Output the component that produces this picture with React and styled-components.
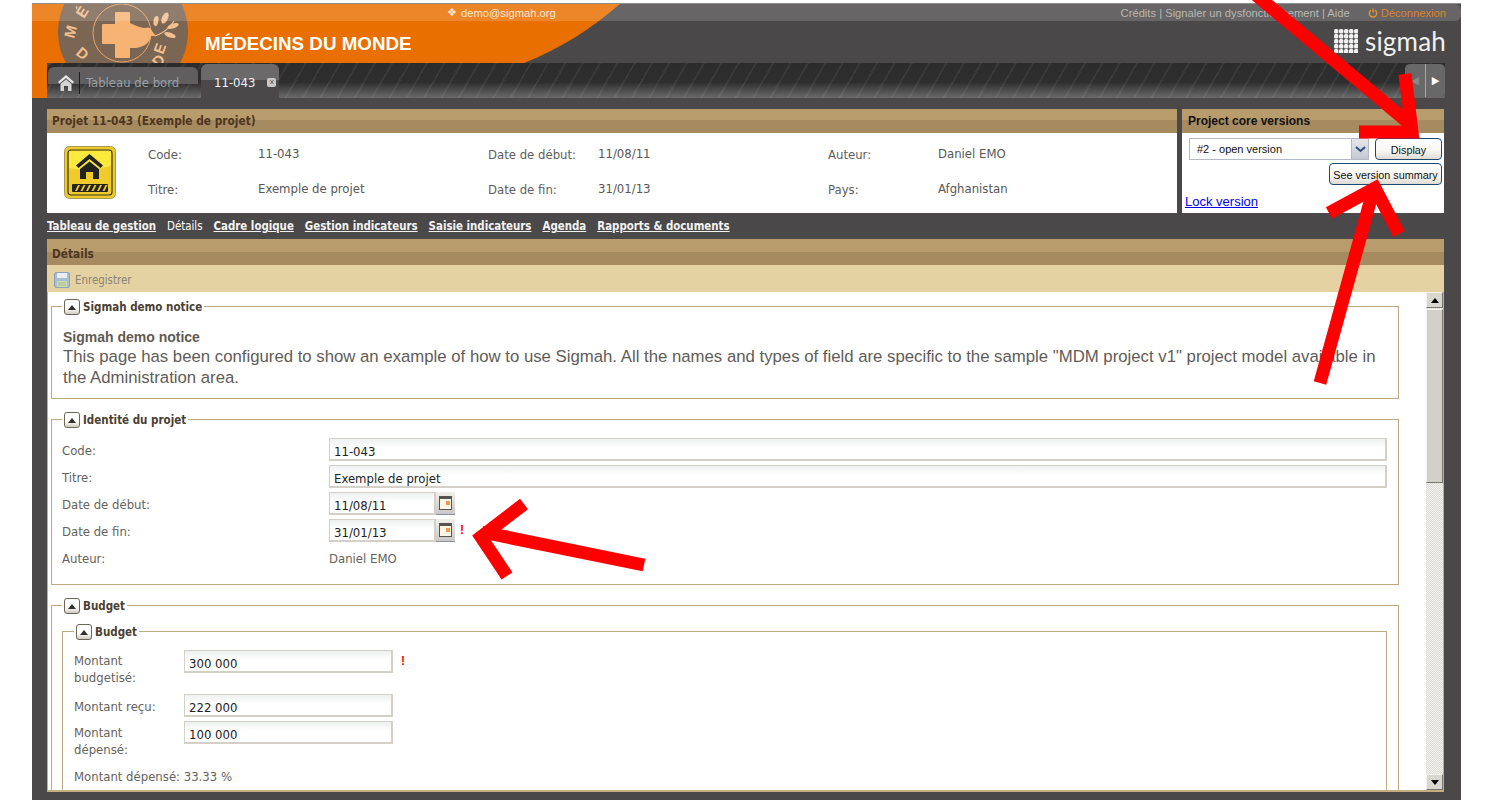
import styled, { createGlobalStyle } from "styled-components";

const GlobalStyle = createGlobalStyle`
  html, body { margin: 0; padding: 0; background: #fff; }
  body { font-family: "DejaVu Sans Condensed", "DejaVu Sans", sans-serif; font-size: 13px; color: #5d5a55; }
  * { box-sizing: border-box; }
`;

const Page = styled.div`
  position: relative;
  width: 1500px;
  height: 800px;
  overflow: hidden;
  padding: 3px 39px 0 32px;
  background: #fff;
`;

const Frame = styled.div`
  position: relative;
  height: 797px;
  overflow: hidden;
  background: #4a4848;
  border-top: 1px solid #8f8f8f;
`;

const Swoosh = styled.svg`
  position: absolute;
  left: 0;
  top: 0;
`;

const Header = styled.header`
  position: relative;
  height: 59px;
`;

const TopStrip = styled.div`
  display: flex;
  align-items: center;
  height: 17px;
  padding: 0 15px 0 415px;
  border-radius: 0 6px 6px 0;
  background: rgba(255, 255, 255, 0.16);
  font-family: "Liberation Sans", Arial, sans-serif;
  font-size: 11.2px;
  color: #f6e6d2;
`;

const Email = styled.span`
  display: flex;
  align-items: center;
  gap: 4px;
  flex: 1;
`;

const TopLinks = styled.span`
  color: #b9b7b5;
`;

const Logout = styled.span`
  display: flex;
  align-items: center;
  gap: 3px;
  margin-left: 18px;
  color: #d9852c;
`;

const BrandRow = styled.div`
  display: flex;
  align-items: center;
  justify-content: space-between;
  height: 42px;
  padding: 3px 15px 0 173px;
`;

const BrandName = styled.div`
  font-family: "Liberation Sans", Arial, sans-serif;
  font-size: 18.8px;
  font-weight: 700;
  color: #fff;
`;

const SigmahLogo = styled.div`
  display: flex;
  align-items: center;
  gap: 7px;
  margin-top: -5px;
  font-family: Lato, sans-serif;
  font-size: 26px;
  line-height: 24px;
  letter-spacing: 0.2px;
  color: #f1f1f1;
`;

const TabBar = styled.div`
  position: relative;
  display: flex;
  align-items: flex-end;
  gap: 3px;
  height: 35px;
  margin: 0 16px 0 15px;
  padding: 0 0 0 1px;
  border-radius: 8px 0 0 0;
  background:
    repeating-linear-gradient(120deg, transparent 0 13px, rgba(255, 255, 255, 0.06) 13px 15px),
    linear-gradient(#2d2c2c 0, #2f2e2e 55%, #6a6a6a 100%);
`;

const HomeTab = styled.div`
  display: flex;
  align-items: center;
  width: 150px;
  height: 31px;
  padding: 0 0 0 9px;
  border-radius: 6px 6px 0 0;
  background: linear-gradient(#605e5e 0, #605e5e 17px, transparent 17px);
  color: #98a0a8;
`;

const TabDivider = styled.span`
  width: 1px;
  height: 22px;
  margin: 0 6px 0 4px;
  background: #1c1c1c;
`;

const ActiveTab = styled.div`
  display: flex;
  align-items: center;
  gap: 12px;
  width: 78px;
  height: 34px;
  padding: 3px 0 0 13px;
  border-radius: 6px 6px 0 0;
  background: linear-gradient(#6b6969 0, #6b6969 16px, #4a4848 16px);
  color: #f2f4f6;
`;

const TabClose = styled.span`
  display: grid;
  place-items: center;
  width: 9px;
  height: 9px;
  border-radius: 2px;
  background: #c9c9c9;
  font-family: "Liberation Sans", sans-serif;
  font-size: 9px;
  line-height: 9px;
  color: #555;
`;

const TabArrows = styled.div`
  display: flex;
  margin: 0 0 1px auto;
  height: 33px;
  border-radius: 5px;
  background: #696868;
`;

const TabArrow = styled.span`
  display: grid;
  place-items: center;
  width: 20px;
  border-left: ${(p) => (p.$divided ? "1px solid #a8a8a8" : "none")};
  color: ${(p) => (p.$dim ? "#8b8a8a" : "#fff")};
  font-size: 11px;
`;

const Main = styled.main`
  display: flex;
  flex-direction: column;
  padding: 11px 17px 0 15px;
`;

const TopRow = styled.div`
  display: flex;
  gap: 5px;
  height: 104px;
`;

const Panel = styled.section`
  display: flex;
  flex-direction: column;
  flex: ${(p) => (p.$side ? "0 0 262px" : "1")};
  background: #fff;
  overflow: hidden;
`;

const DetailsPanel = styled(Panel)`
  flex: 0 0 553px;
`;

const PanelHead = styled.div`
  flex: none;
  height: ${(p) => p.$height || "24px"};
  padding: ${(p) => p.$top || "5px"} 5px 0 ${(p) => (p.$plain ? "6px" : "5px")};
  background: linear-gradient(#b99c6b 0, #b99c6b ${(p) => p.$split || "11px"}, #a68b61 ${(p) => p.$split || "11px"});
  font-family: ${(p) => (p.$plain ? '"Liberation Sans", Arial, sans-serif' : '"DejaVu Sans Condensed", "DejaVu Sans", sans-serif')};
  font-size: ${(p) => (p.$plain ? "12px" : "11.8px")};
  font-weight: 700;
  color: ${(p) => (p.$plain ? "#111" : "#4e3620")};
`;

const ProjectInfo = styled.div`
  display: grid;
  grid-template-columns: 84px 110px 230px 110px 230px 110px 1fr;
  grid-template-rows: 35px 35px;
  align-items: center;
  padding: 4px 0 0 17px;
`;

const ProjectIcon = styled.div`
  grid-row: 1 / span 2;
  display: flex;
`;

const InfoLabel = styled.span`
  color: #5f5d5b;
`;

const InfoValue = styled.span`
  margin-top: -2px;
  color: #5a5652;
`;

const VersionBody = styled.div`
  display: flex;
  flex-direction: column;
  padding: 5px 2px 0 3px;
`;

const VersionRow = styled.div`
  display: flex;
  justify-content: flex-end;
  gap: 6px;
  margin-bottom: 3px;
`;

const VersionSelect = styled.div`
  display: flex;
  align-items: center;
  justify-content: space-between;
  width: 180px;
  height: 22px;
  border: 1px solid #b5b8c8;
  padding-left: 7px;
  font-family: "Liberation Sans", Arial, sans-serif;
  font-size: 11px;
  color: #111;
`;

const SelectArrow = styled.span`
  display: grid;
  place-items: center;
  width: 17px;
  height: 100%;
  background: linear-gradient(#e6e7ec, #c4c7d2);
  border-left: 1px solid #b5b8c8;
`;

const ActionButton = styled.button`
  height: 22px;
  width: ${(p) => p.$width};
  padding: 2px 0 0;
  border: 1px solid #1d4a72;
  border-radius: 4px;
  background: linear-gradient(#fff 0, #f7f6f2 60%, #dedbd2 100%);
  font-family: "Liberation Sans", Arial, sans-serif;
  font-size: 10.8px;
  color: #111;
`;

const LockLink = styled.a`
  margin-top: 6px;
  font-family: "Liberation Sans", Arial, sans-serif;
  font-size: 13px;
  color: #00e;
  text-decoration: underline;
`;

const TabsNav = styled.nav`
  display: flex;
  gap: 11px;
  height: 26px;
  padding-top: 6px;
  font-size: 11.4px;
  font-weight: 700;
  color: #f3f3f3;
`;

const NavLink = styled.span`
  text-decoration: ${(p) => (p.$active ? "none" : "underline")};
  font-weight: ${(p) => (p.$active ? 400 : 700)};
  color: ${(p) => (p.$active ? "#fff" : "inherit")};
`;

const Toolbar = styled.div`
  flex: none;
  display: flex;
  align-items: center;
  gap: 5px;
  height: 27px;
  padding: 3px 0 0 7px;
  background: #e5d2a3;
  font-size: 11.4px;
  color: #8a8475;
`;

const DetailsBody = styled.div`
  display: flex;
  flex: 1;
  min-height: 0;
  border: 1px solid #c5ae80;
  border-top: 0;
  border-bottom-width: 2px;
`;

const ScrollContent = styled.div`
  flex: 1;
  min-width: 0;
  overflow: hidden;
  padding: 6px 27px 0 3px;
`;

const FieldGroup = styled.fieldset`
  margin: ${(p) => p.$margin || "0 0 12px"};
  min-width: 0;
  padding: ${(p) => p.$padding || "0 11px 0 10px"};
  border: 1px solid #bfa97f;
`;

const GroupLegend = styled.legend`
  display: flex;
  align-items: center;
  gap: 3px;
  height: 16px;
  margin-left: 0;
  padding: 2px 2px 0;
  font-size: 11.5px;
  font-weight: 700;
  color: #4b4032;
`;

const Toggle = styled.span`
  display: grid;
  place-items: center;
  flex: none;
  width: 16px;
  height: 16px;
  border: 1px solid #6e6559;
  border-radius: 3px;
  background: linear-gradient(#fff 60%, #cfcac0);
  &::before {
    content: "";
    border: 4px solid transparent;
    border-top: 0;
    border-bottom: 5px solid #33302b;
  }
`;

const NoticeTitle = styled.div`
  margin: 15px 0 0 1px;
  font-family: "Liberation Sans", Arial, sans-serif;
  font-size: 14px;
  font-weight: 700;
  line-height: 17px;
  color: #5f5a52;
`;

const NoticeText = styled.p`
  margin: 0 0 10px 1px;
  font-family: "Liberation Sans", Arial, sans-serif;
  font-size: 16.75px;
  line-height: 21px;
  color: #5f5c58;
`;

const FormGrid = styled.div`
  display: grid;
  grid-template-columns: ${(p) => p.$label} 1fr;
  row-gap: 4px;
  padding: ${(p) => p.$padding};
`;

const FieldLabel = styled.label`
  padding: ${(p) => p.$top || "4px"} 0 ${(p) => p.$bottom || "0"};
  line-height: 17px;
  color: #66625c;
`;

const FieldValue = styled.div`
  display: flex;
  align-items: flex-start;
  min-height: 23px;
`;

const TextInput = styled.div`
  width: ${(p) => p.$width || "100%"};
  height: 23px;
  padding: 5px 0 0 4px;
  border: 2px solid #dcd8d0;
  border-width: 1px 2px 2px 1px;
  border-color: #d4d0c8;
  background: linear-gradient(#eef1f1 0, #fff 9px);
  line-height: 16px;
  color: #222;
`;

const DateButton = styled.span`
  display: grid;
  place-items: center;
  width: 19px;
  height: 23px;
  background: linear-gradient(#f2f0ea, #c9c8c6);
  border-bottom: 1px solid #87909c;
`;

const Mark = styled.span`
  margin-left: ${(p) => p.$gap || "5px"};
  font-family: "Liberation Sans", Arial, sans-serif;
  font-size: 12px;
  font-weight: 700;
  line-height: 23px;
  color: #f00;
`;

const StaticValue = styled.span`
  padding-top: 5px;
  color: #66625c;
`;

const BudgetNote = styled.div`
  margin: 11px 0 40px;
  color: #66625c;
`;

const ScrollBar = styled.div`
  flex: 0 0 17px;
  display: flex;
  flex-direction: column;
  background: repeating-conic-gradient(#dcdbd7 0 25%, #f4f3f0 0 50%) 0 0 / 2px 2px;
`;

const ScrollButton = styled.div`
  flex: none;
  display: grid;
  place-items: center;
  height: 16px;
  background: #dad7d0;
  border: 1px solid;
  border-color: #f3f2ee #77756f #77756f #f3f2ee;
  &::before {
    content: "";
    border: 4px solid transparent;
    ${(p) => (p.$down ? "border-top: 5px solid #000; border-bottom: 0;" : "border-bottom: 5px solid #000; border-top: 0;")}
  }
`;

const ScrollThumb = styled.div`
  flex: none;
  height: 174px;
  margin-top: 1px;
  background: #d3d0c9;
  border: 1px solid;
  border-color: #f3f2ee #77756f #77756f #f3f2ee;
`;

const ScrollSpacer = styled.div`
  flex: 1;
`;

const Arrows = styled.svg`
  position: absolute;
  left: 0;
  top: 0;
  pointer-events: none;
`;

const HomeIcon = () => (
  <svg width="18" height="18" viewBox="0 0 18 18">
    <path d="M9 1 L17 8 L15.5 9.5 L9 4 L2.5 9.5 L1 8 Z" fill="#e8e8e8" />
    <path d="M3.5 10 L9 5.5 L14.5 10 V17 H11 V12 H7 V17 H3.5 Z" fill="#d5d5d5" />
  </svg>
);

const LogoBadge = () => (
  <g>
    <circle cx="91" cy="28" r="65" fill="#7b6553" />
    <circle cx="90" cy="29" r="29" fill="none" stroke="#e7a56a" strokeWidth="1" />
    <path d="M83 9 Q83 8 84 8 H97 Q98 8 98 9 V19 Q108 24 113 24 Q118 22 120 27 L124 32 L119 32 Q116 45 98 44 V53 Q98 54 97 54 H84 Q83 54 83 53 V40 H71 Q70 40 70 39 V21 Q70 20 71 20 H83 Z" fill="#f6b373" />
    <path d="M123 32 Q135 28 142 17" fill="none" stroke="#f2c08f" strokeWidth="1.2" />
    <ellipse cx="133" cy="14" rx="3" ry="6" fill="#f2c08f" transform="rotate(25 133 14)" />
    <ellipse cx="124" cy="17" rx="2.4" ry="5" fill="#f2c08f" transform="rotate(10 124 17)" />
    <ellipse cx="141" cy="22" rx="6" ry="2.4" fill="#f2c08f" transform="rotate(-20 141 22)" />
    <ellipse cx="138" cy="31" rx="6" ry="2.4" fill="#f2c08f" transform="rotate(20 138 31)" />
    <g fontFamily="Liberation Sans, sans-serif" fontWeight="700" fontSize="15" fill="#f2c08f">
      <text transform="translate(42 35) rotate(-75)">M</text>
      <text transform="translate(52 15) rotate(-58)">É</text>
      <text transform="translate(43 50) rotate(40)">D</text>
      <text transform="translate(127 64) rotate(-50)">D</text>
      <text transform="translate(131 51) rotate(-70)">E</text>
    </g>
  </g>
);

const SigmahMark = () => (
  <svg width="24" height="24" viewBox="0 0 24 24" fill="#f1f1f1">
    {[0, 1, 2, 3, 4].flatMap((r) =>
      [0, 1, 2, 3, 4].map((c) => <rect key={`${r}-${c}`} x={c * 5} y={r * 5} width="4.4" height="4.4" rx="1.5" />)
    )}
  </svg>
);

const ProjectBadge = () => (
  <svg width="52" height="53" viewBox="0 0 52 53">
    <rect x="0.5" y="0.5" width="51" height="52" rx="5" fill="#eec92c" stroke="#a89a55" />
    <rect x="4" y="4" width="44" height="45" rx="3" fill="#f0cb2c" stroke="#3a3520" strokeWidth="1.2" />
    <path d="M5 5 H47 V20 Q26 26 5 22 Z" fill="#fbe93c" />
    <path d="M25.5 8 L39 19.5 L36.5 22 L25.5 13 L14.5 22 L12 19.5 Z" fill="#23231f" />
    <path d="M16 23 L25.5 15.5 L35 23 V33 H29 V26 H22 V33 H16 Z" fill="#23231f" />
    <rect x="8" y="38" width="36" height="8" rx="1" fill="#23231f" />
    {[0, 1, 2, 3, 4, 5].map((i) => (
      <path key={i} d={`M${11 + i * 5.5} 45 L${14 + i * 5.5} 39 H${16 + i * 5.5} L${13 + i * 5.5} 45 Z`} fill="#f0cb2c" />
    ))}
  </svg>
);

const FloppyIcon = () => (
  <svg width="16" height="16" viewBox="0 0 16 16">
    <rect x="0.5" y="0.5" width="15" height="15" rx="1.5" fill="#a9bdd0" stroke="#8ea3b8" />
    <rect x="3" y="1" width="10" height="5" fill="#e7edf2" />
    <rect x="3" y="9" width="10" height="6" fill="#cfdcae" />
    <path d="M4 11 H12 M4 13 H12" stroke="#9fb08a" strokeWidth="0.8" />
  </svg>
);

const CalendarIcon = () => (
  <svg width="13" height="14" viewBox="0 0 13 14">
    <rect x="0.5" y="0.5" width="12" height="13" fill="#fbf5e6" stroke="#55544f" />
    <rect x="1" y="1" width="11" height="2" fill="#55544f" />
    <rect x="7" y="5" width="4" height="4" fill="#ee9a4d" />
  </svg>
);

const Chevron = () => (
  <svg width="11" height="7" viewBox="0 0 11 7">
    <path d="M1 1 L5.5 5 L10 1" fill="none" stroke="#2f4f7f" strokeWidth="2" />
  </svg>
);

const PowerIcon = () => (
  <svg width="10" height="10" viewBox="0 0 10 10" fill="none" stroke="#e2922f" strokeWidth="1.4">
    <path d="M3 2.2 A3.7 3.7 0 1 0 7 2.2 M5 0.5 V4.5" />
  </svg>
);

const App = () => {
  return (
    <Page>
      <GlobalStyle />
      <Frame>
        <Swoosh width="600" height="95" viewBox="0 0 600 95">
          <path d="M0 0 H588 C560 24 530 44 492 59 H15 V94 H0 Z" fill="#e96f00" />
          <LogoBadge />
        </Swoosh>
        <Header>
          <TopStrip>
            <Email>
              <span>❖</span>
              demo@sigmah.org
            </Email>
            <TopLinks>Crédits | Signaler un dysfonctionnement | Aide</TopLinks>
            <Logout>
              <PowerIcon />
              Déconnexion
            </Logout>
          </TopStrip>
          <BrandRow>
            <BrandName>MÉDECINS DU MONDE</BrandName>
            <SigmahLogo>
              <SigmahMark />
              sigmah
            </SigmahLogo>
          </BrandRow>
        </Header>
        <TabBar>
          <HomeTab>
            <HomeIcon />
            <TabDivider />
            Tableau de bord
          </HomeTab>
          <ActiveTab>
            11-043
            <TabClose>×</TabClose>
          </ActiveTab>
          <TabArrows>
            <TabArrow $dim>◀</TabArrow>
            <TabArrow $divided>▶</TabArrow>
          </TabArrows>
        </TabBar>
        <Main>
          <TopRow>
            <Panel>
              <PanelHead>Projet 11-043 (Exemple de projet)</PanelHead>
              <ProjectInfo>
                <ProjectIcon>
                  <ProjectBadge />
                </ProjectIcon>
                <InfoLabel>Code:</InfoLabel>
                <InfoValue>11-043</InfoValue>
                <InfoLabel>Date de début:</InfoLabel>
                <InfoValue>11/08/11</InfoValue>
                <InfoLabel>Auteur:</InfoLabel>
                <InfoValue>Daniel EMO</InfoValue>
                <InfoLabel>Titre:</InfoLabel>
                <InfoValue>Exemple de projet</InfoValue>
                <InfoLabel>Date de fin:</InfoLabel>
                <InfoValue>31/01/13</InfoValue>
                <InfoLabel>Pays:</InfoLabel>
                <InfoValue>Afghanistan</InfoValue>
              </ProjectInfo>
            </Panel>
            <Panel $side>
              <PanelHead $plain>Project core versions</PanelHead>
              <VersionBody>
                <VersionRow>
                  <VersionSelect>
                    #2 - open version
                    <SelectArrow>
                      <Chevron />
                    </SelectArrow>
                  </VersionSelect>
                  <ActionButton $width="67px">Display</ActionButton>
                </VersionRow>
                <VersionRow>
                  <ActionButton $width="113px">See version summary</ActionButton>
                </VersionRow>
                <LockLink href="#">Lock version</LockLink>
              </VersionBody>
            </Panel>
          </TopRow>
          <TabsNav>
            <NavLink>Tableau de gestion</NavLink>
            <NavLink $active>Détails</NavLink>
            <NavLink>Cadre logique</NavLink>
            <NavLink>Gestion indicateurs</NavLink>
            <NavLink>Saisie indicateurs</NavLink>
            <NavLink>Agenda</NavLink>
            <NavLink>Rapports &amp; documents</NavLink>
          </TabsNav>
          <DetailsPanel>
            <PanelHead $height="26px" $top="8px" $split="13px">
              Détails
            </PanelHead>
            <Toolbar>
              <FloppyIcon />
              Enregistrer
            </Toolbar>
            <DetailsBody>
              <ScrollContent>
                <FieldGroup>
                  <GroupLegend>
                    <Toggle />
                    Sigmah demo notice
                  </GroupLegend>
                  <NoticeTitle>Sigmah demo notice</NoticeTitle>
                  <NoticeText>
                    This page has been configured to show an example of how to use Sigmah. All the names and types of
                    field are specific to the sample "MDM project v1" project model available in the Administration
                    area.
                  </NoticeText>
                </FieldGroup>
                <FieldGroup>
                  <GroupLegend>
                    <Toggle />
                    Identité du projet
                  </GroupLegend>
                  <FormGrid $label="267px" $padding="11px 0 17px">
                    <FieldLabel>Code:</FieldLabel>
                    <FieldValue>
                      <TextInput>11-043</TextInput>
                    </FieldValue>
                    <FieldLabel>Titre:</FieldLabel>
                    <FieldValue>
                      <TextInput>Exemple de projet</TextInput>
                    </FieldValue>
                    <FieldLabel>Date de début:</FieldLabel>
                    <FieldValue>
                      <TextInput $width="107px">11/08/11</TextInput>
                      <DateButton>
                        <CalendarIcon />
                      </DateButton>
                    </FieldValue>
                    <FieldLabel>Date de fin:</FieldLabel>
                    <FieldValue>
                      <TextInput $width="107px">31/01/13</TextInput>
                      <DateButton>
                        <CalendarIcon />
                      </DateButton>
                      <Mark>!</Mark>
                    </FieldValue>
                    <FieldLabel>Auteur:</FieldLabel>
                    <StaticValue>Daniel EMO</StaticValue>
                  </FormGrid>
                </FieldGroup>
                <FieldGroup $padding="10px 11px 0 10px">
                  <GroupLegend>
                    <Toggle />
                    Budget
                  </GroupLegend>
                  <FieldGroup $padding="0 11px" $margin="0">
                    <GroupLegend>
                      <Toggle />
                      Budget
                    </GroupLegend>
                    <FormGrid $label="110px" $padding="11px 0 0">
                      <FieldLabel $top="2px" $bottom="4px">
                        Montant
                        <br />
                        budgetisé:
                      </FieldLabel>
                      <FieldValue>
                        <TextInput $width="209px">300 000</TextInput>
                        <Mark $gap="8px">!</Mark>
                      </FieldValue>
                      <FieldLabel>Montant reçu:</FieldLabel>
                      <FieldValue>
                        <TextInput $width="209px">222 000</TextInput>
                      </FieldValue>
                      <FieldLabel $top="3px">
                        Montant
                        <br />
                        dépensé:
                      </FieldLabel>
                      <FieldValue>
                        <TextInput $width="209px">100 000</TextInput>
                      </FieldValue>
                    </FormGrid>
                    <BudgetNote>Montant dépensé: 33.33 %</BudgetNote>
                  </FieldGroup>
                </FieldGroup>
              </ScrollContent>
              <ScrollBar>
                <ScrollButton />
                <ScrollThumb />
                <ScrollSpacer />
                <ScrollButton $down />
              </ScrollBar>
            </DetailsBody>
          </DetailsPanel>
        </Main>
      </Frame>
      <Arrows width="1500" height="800" viewBox="0 0 1500 800">
        <g fill="none" stroke="#f00" strokeWidth="13" strokeMiterlimit="10">
          <path d="M1256 -5 L1410 124" />
          <path d="M1405 74 L1412 132 L1359 132" />
          <path d="M1320 383 L1372 195" />
          <path d="M1329 213 L1375 188 L1399 234" />
          <path d="M644 565 L482 532" />
          <path d="M524 504 L481 537 L507 576" />
        </g>
      </Arrows>
    </Page>
  );
};

export default App;
